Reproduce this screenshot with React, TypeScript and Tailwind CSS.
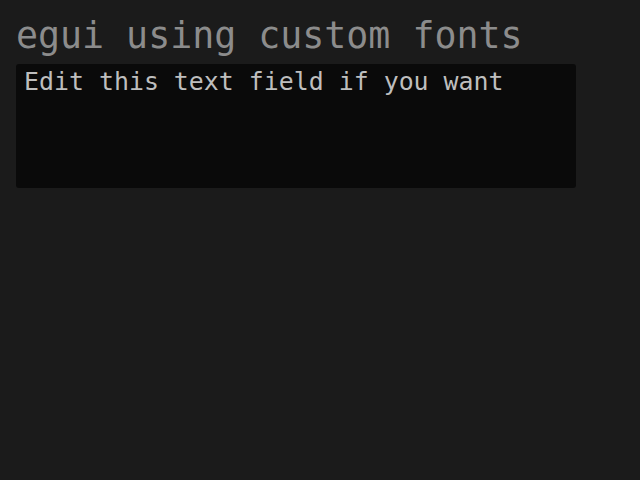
export default function App() {
  return (
    <div className="w-[640px] h-[480px] bg-[#1b1b1b] px-4 pt-[12px] font-['DejaVu_Sans_Mono',monospace]">
      <h1 className="text-[36.6px] leading-[48px] text-[#8c8c8c]">egui using custom fonts</h1>
      <textarea
        className="mt-[4px] block w-[560px] h-[124px] resize-none rounded-[3px] bg-[#0a0a0a] px-2 pt-[1px] pb-0 text-[24.9px] leading-[34px] text-[#bebebe] outline-none"
        defaultValue="Edit this text field if you want"
      />
    </div>
  )
}
